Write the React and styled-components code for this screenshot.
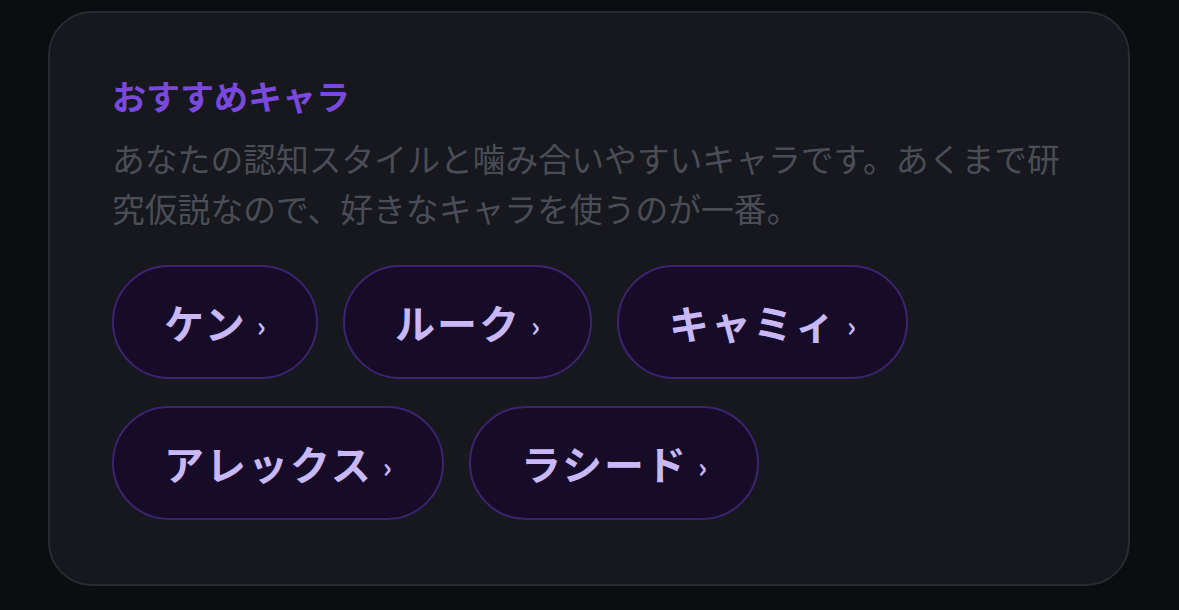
import React from "react";
import styled, { createGlobalStyle } from "styled-components";

const GlobalStyle = createGlobalStyle`
  html, body {
    margin: 0;
    background: #0c0d10;
  }
  body {
    padding: 11px 49px 0 48px;
    font-family: "Noto Sans CJK JP", "Noto Sans", sans-serif;
  }
`;

const Card = styled.section`
  background: #16181e;
  border: 2px solid #2a2b31;
  border-radius: 44px;
  padding: 62px 62px 64px 62px;
`;

const Title = styled.h2`
  margin: 0;
  font-size: 34px;
  line-height: 42px;
  font-weight: 700;
  color: #7a48dc;
`;

const Description = styled.p`
  margin: 16px 0 0;
  font-size: 32.8px;
  line-height: 50px;
  color: #4b4d56;
`;

const PillList = styled.div`
  display: flex;
  flex-wrap: wrap;
  gap: 27px 25px;
  margin-top: 32px;
`;

const Pill = styled.button`
  display: inline-flex;
  align-items: center;
  height: 114px;
  padding: 0 50px;
  border-radius: 57px;
  border: 2px solid #3a2470;
  background: #170c28;
  color: #c9b8f7;
  font-family: inherit;
  font-size: 40px;
  font-weight: 700;
  letter-spacing: 2px;
  cursor: pointer;
`;

const Chevron = styled.span`
  font-size: 28px;
  margin-left: 10px;
  margin-top: 6px;
  font-weight: 700;
  letter-spacing: 0;
`;

const characters = ["ケン", "ルーク", "キャミィ", "アレックス", "ラシード"];

const App = () => {
  return (
    <>
      <GlobalStyle />
      <Card>
        <Title>おすすめキャラ</Title>
        <Description>
          あなたの認知スタイルと噛み合いやすいキャラです。あくまで研究仮説なので、好きなキャラを使うのが一番。
        </Description>
        <PillList>
          {characters.map((name) => (
            <Pill key={name}>
              {name}
              <Chevron>›</Chevron>
            </Pill>
          ))}
        </PillList>
      </Card>
    </>
  );
};

export default App;
